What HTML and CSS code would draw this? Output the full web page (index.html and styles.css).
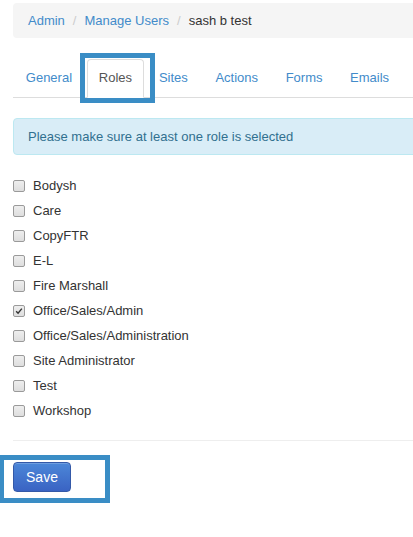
FILE: index.html
```html
<!DOCTYPE html>
<html>
<head>
<meta charset="utf-8">
<link rel="stylesheet" href="styles.css">
</head>
<body>
<div class="page">
  <ol class="breadcrumb">
    <li><a href="#">Admin</a></li>
    <li class="sep">/</li>
    <li><a href="#">Manage Users</a></li>
    <li class="sep">/</li>
    <li class="current">sash b test</li>
  </ol>

  <ul class="tabs">
    <li class="tab"><a href="#">General</a></li>
    <li class="tab active"><a href="#">Roles</a><span class="mark mark-tab"></span></li>
    <li class="tab"><a href="#">Sites</a></li>
    <li class="tab"><a href="#">Actions</a></li>
    <li class="tab"><a href="#">Forms</a></li>
    <li class="tab"><a href="#">Emails</a></li>
  </ul>

  <div class="alert">Please make sure at least one role is selected</div>

  <ul class="roles">
    <li class="role"><span class="cb"></span>Bodysh</li>
    <li class="role"><span class="cb"></span>Care</li>
    <li class="role"><span class="cb"></span>CopyFTR</li>
    <li class="role"><span class="cb"></span>E-L</li>
    <li class="role"><span class="cb"></span>Fire Marshall</li>
    <li class="role"><span class="cb checked"><svg viewBox="0 0 12 12" width="12" height="12"><path d="M2.6 6.2 L4.9 8.6 L9.4 3.2" fill="none" stroke="#333" stroke-width="1.7"/></svg></span>Office/Sales/Admin</li>
    <li class="role"><span class="cb"></span>Office/Sales/Administration</li>
    <li class="role"><span class="cb"></span>Site Administrator</li>
    <li class="role"><span class="cb"></span>Test</li>
    <li class="role"><span class="cb"></span>Workshop</li>
  </ul>

  <hr class="divider">

  <div class="actions">
    <button class="btn">Save</button>
    <span class="mark mark-btn"></span>
  </div>
</div>
</body>
</html>
```

FILE: styles.css
```css
html {
  overflow: hidden;
}
html, body {
  margin: 0;
  padding: 0;
  background: #fff;
}
body {
  font-family: "Liberation Sans", Arial, sans-serif;
  font-size: 13px;
  color: #333;
}
.page {
  padding: 3px 0 44px 13px;
  width: 430px;
}
a {
  color: #428bca;
  text-decoration: none;
}
.breadcrumb {
  list-style: none;
  margin: 0;
  padding: 0 15px;
  height: 35px;
  display: flex;
  align-items: center;
  gap: 7px;
  background: #f5f5f5;
  border-radius: 4px;
}
.breadcrumb .sep {
  color: #ccc;
  padding: 0 1px;
}
.breadcrumb .current {
  color: #333;
}
.tabs {
  list-style: none;
  margin: 21px 0 0 0;
  padding: 0;
  display: flex;
  border-bottom: 1px solid #ddd;
  height: 38px;
}
.tab {
  position: relative;
  margin-right: 2px;
  margin-bottom: -1px;
}
.tab a {
  box-sizing: border-box;
  display: flex;
  align-items: center;
  height: 39px;
  padding: 0 11.8px 2px;
  border: 1px solid transparent;
  border-radius: 4px 4px 0 0;
}
.tab.active a {
  color: #555;
  background: #fff;
  border-color: #ddd;
  border-bottom-color: #fff;
  padding: 0 11px 2px;
}
.mark {
  position: absolute;
  box-sizing: border-box;
  border: 5px solid #3a8dc5;
  pointer-events: none;
}
.mark-tab {
  left: -7px;
  right: -11px;
  top: -6px;
  bottom: -5px;
}
.alert {
  margin-top: 20px;
  height: 37px;
  box-sizing: border-box;
  display: flex;
  align-items: center;
  padding: 0 14px;
  background: #d9edf7;
  border: 1px solid #bce8f1;
  border-radius: 4px;
  color: #31708f;
}
.roles {
  list-style: none;
  margin: 18px 0 0 0;
  padding: 0;
}
.role {
  height: 25px;
  display: flex;
  align-items: center;
  color: #333;
}
.cb {
  box-sizing: border-box;
  width: 12px;
  height: 12px;
  border: 1px solid #9a9a9a;
  border-radius: 2px;
  background: linear-gradient(#eeeeee, #dedede);
  margin-right: 8px;
  display: flex;
  align-items: center;
  justify-content: center;
}
.cb svg {
  display: block;
}
.divider {
  margin: 17px 0 0 0;
  border: 0;
  border-top: 1px solid #eee;
}
.actions {
  position: relative;
  margin-top: 21px;
  height: 30px;
  display: flex;
}
.btn {
  width: 58px;
  height: 30px;
  font-family: "Liberation Sans", Arial, sans-serif;
  font-size: 14px;
  color: #fff;
  border: 1px solid #3459a8;
  border-radius: 4px;
  background: linear-gradient(#4c87d8, #3a63c3);
  padding: 0;
  box-shadow: inset 0 1px 0 rgba(255,255,255,0.2);
}
.mark-btn {
  left: -14px;
  top: -7px;
  width: 111px;
  height: 48px;
}
```
